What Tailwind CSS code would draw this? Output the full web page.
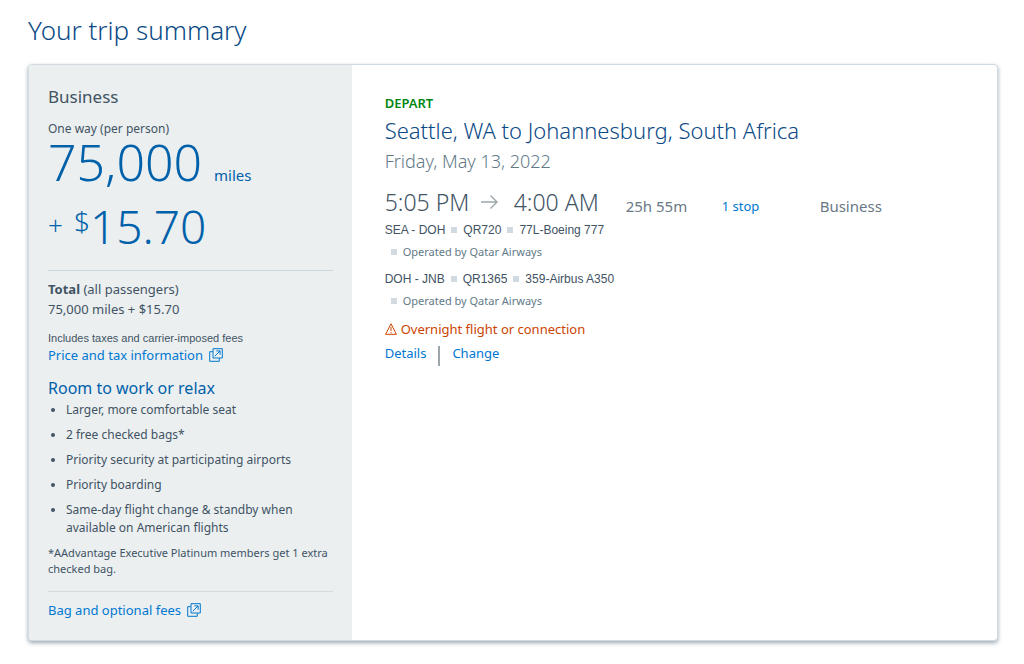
<!DOCTYPE html>
<html lang="en">
<head>
  <meta charset="UTF-8" />
  <meta name="viewport" content="width=device-width, initial-scale=1.0" />
  <title>Your trip summary</title>
  <script src="https://cdn.jsdelivr.net/npm/@tailwindcss/browser@4"></script>
</head>
<body class="bg-white font-['Noto_Sans',sans-serif] text-[13px] leading-5 text-[#415364]">
  <!-- popup icon shared by the links that open a new window -->
  <svg class="hidden">
    <symbol id="popup" viewBox="0 0 14 14">
      <g fill="none" stroke="currentColor" stroke-linejoin="round">
        <path d="M4 .7h9.3v9.3H4z" />
        <path d="M3.8 3.7H.7v9.6h9.6v-3.1M5.8 8.2l5.2-5.2M7.3 2.9h3.8v3.8" />
      </g>
    </symbol>
  </svg>

  <main class="pt-3 pl-7 pr-[26px] pb-6">
    <h1 class="text-[26px] leading-9 font-light text-[#0b4a86]">Your trip summary</h1>

    <div class="mt-4 flex rounded-sm border border-[#d0dae0] bg-white shadow-[0_2px_4px_#9daab4]">
      <aside class="w-1/3 shrink-0 rounded-l-sm bg-[#ebeff0] px-[19px] pt-5 pb-5">
        <h2 class="text-[17px] leading-6">Business</h2>
        <p class="mt-[10px] text-xs leading-5">One way (per person)</p>
        <p class="flex items-baseline gap-3 text-[#0061ab]">
          <span class="text-[50px] leading-[46px] font-light">75,000</span>
          <span class="text-[15px]">miles</span>
        </p>
        <p class="mt-4 flex text-[#0061ab]">
          <span class="mt-2 w-[26px] text-[26px] leading-8 font-light">+</span>
          <span class="mt-1 text-[28px] leading-8 font-light">$</span>
          <span class="text-[46px] leading-[50px] font-light">15.70</span>
        </p>

        <div class="mt-[19px] border-t border-[#ccd8df] pt-2">
          <p><strong>Total</strong> (all passengers)</p>
          <p>75,000 miles + $15.70</p>
          <p class="mt-[11px] font-['Liberation_Sans',sans-serif] text-[11px] leading-4">Includes taxes and carrier-imposed fees</p>
          <a href="#" class="flex items-center gap-[6px] leading-[18px] text-[#0078d2]">Price and tax information
            <svg class="size-[14px]"><use href="#popup" /></svg>
          </a>
        </div>

        <h3 class="mt-[13px] text-base leading-[22px] text-[#0061ab]">Room to work or relax</h3>
        <ul class="mt-[2px] flex list-disc flex-col gap-[7px] pl-[18px] text-xs leading-[18px]">
          <li>Larger, more comfortable seat</li>
          <li>2 free checked bags*</li>
          <li>Priority security at participating airports</li>
          <li>Priority boarding</li>
          <li>Same-day flight change &amp; standby when available on American flights</li>
        </ul>
        <p class="mt-2 text-[11px] leading-4">*AAdvantage Executive Platinum members get 1 extra checked bag.</p>

        <div class="mt-[14px] border-t border-[#d3dbe0] pt-2">
          <a href="#" class="flex items-center gap-[6px] text-[#0078d2]">Bag and optional fees
            <svg class="size-[14px]"><use href="#popup" /></svg>
          </a>
        </div>
      </aside>

      <section class="min-w-0 flex-1 pt-7 pl-[33px]">
        <p class="font-semibold text-[#008712]">DEPART</p>
        <h2 class="mt-[2px] text-[22px] leading-[30px] font-light text-[#0b4a86]">Seattle, WA to Johannesburg, South Africa</h2>
        <p class="mt-1 text-[18px] leading-6 font-light text-[#627a88]">Friday, May 13, 2022</p>

        <div class="mt-[14px] flex items-center">
          <p class="flex w-[241px] shrink-0 items-center text-[23px] leading-[30px] font-light">
            <span class="w-24">5:05 PM</span>
            <svg class="mr-4 h-4 w-[17px]" viewBox="0 0 17 16" fill="none" stroke="#9da6ab" stroke-width="1.4"><path d="M0 8h16M9.500 1.500 16 8l-6.500 6.500" /></svg>
            <span>4:00 AM</span>
          </p>
          <span class="w-24 pt-2 text-[15px] text-[#6a7885]">25h 55m</span>
          <a href="#" class="w-[98px] pt-2 text-[#0078d2]">1 stop</a>
          <span class="pt-2 text-[15px] text-[#6a7885]">Business</span>
        </div>

        <div class="mt-[5px] flex flex-col gap-[11px] leading-4">
          <div>
            <p class="flex items-center gap-[6px] font-['Liberation_Sans',sans-serif] text-xs leading-4">SEA - DOH <i class="size-[6px] bg-[#d0dae0]"></i> QR720 <i class="size-[6px] bg-[#d0dae0]"></i> 77L-Boeing 777</p>
            <p class="mt-[6px] flex items-center gap-[6px] pl-[6px] text-[11px] leading-4 text-[#627a88]"><i class="size-[6px] bg-[#d0dae0]"></i>Operated by Qatar Airways</p>
          </div>
          <div>
            <p class="flex items-center gap-[6px] font-['Liberation_Sans',sans-serif] text-xs leading-4">DOH - JNB <i class="size-[6px] bg-[#d0dae0]"></i> QR1365 <i class="size-[6px] bg-[#d0dae0]"></i> 359-Airbus A350</p>
            <p class="mt-[6px] flex items-center gap-[6px] pl-[6px] text-[11px] leading-4 text-[#627a88]"><i class="size-[6px] bg-[#d0dae0]"></i>Operated by Qatar Airways</p>
          </div>
        </div>

        <p class="mt-[10px] flex items-center gap-1 text-[#cc4400]">
          <svg class="h-3 w-3" viewBox="0 0 12 12" fill="none" stroke="currentColor"><path d="M6 .8 11.400 11.300H.6zM6 4v4M6 9v1.200" /></svg>
          Overnight flight or connection
        </p>
        <div class="mt-1 flex items-start gap-3 text-[#0078d2]">
          <a href="#">Details</a>
          <span class="mt-[3px] h-5 w-[2px] bg-[#9da6ab]"></span>
          <a href="#">Change</a>
        </div>
      </section>
    </div>
  </main>
</body>
</html>
